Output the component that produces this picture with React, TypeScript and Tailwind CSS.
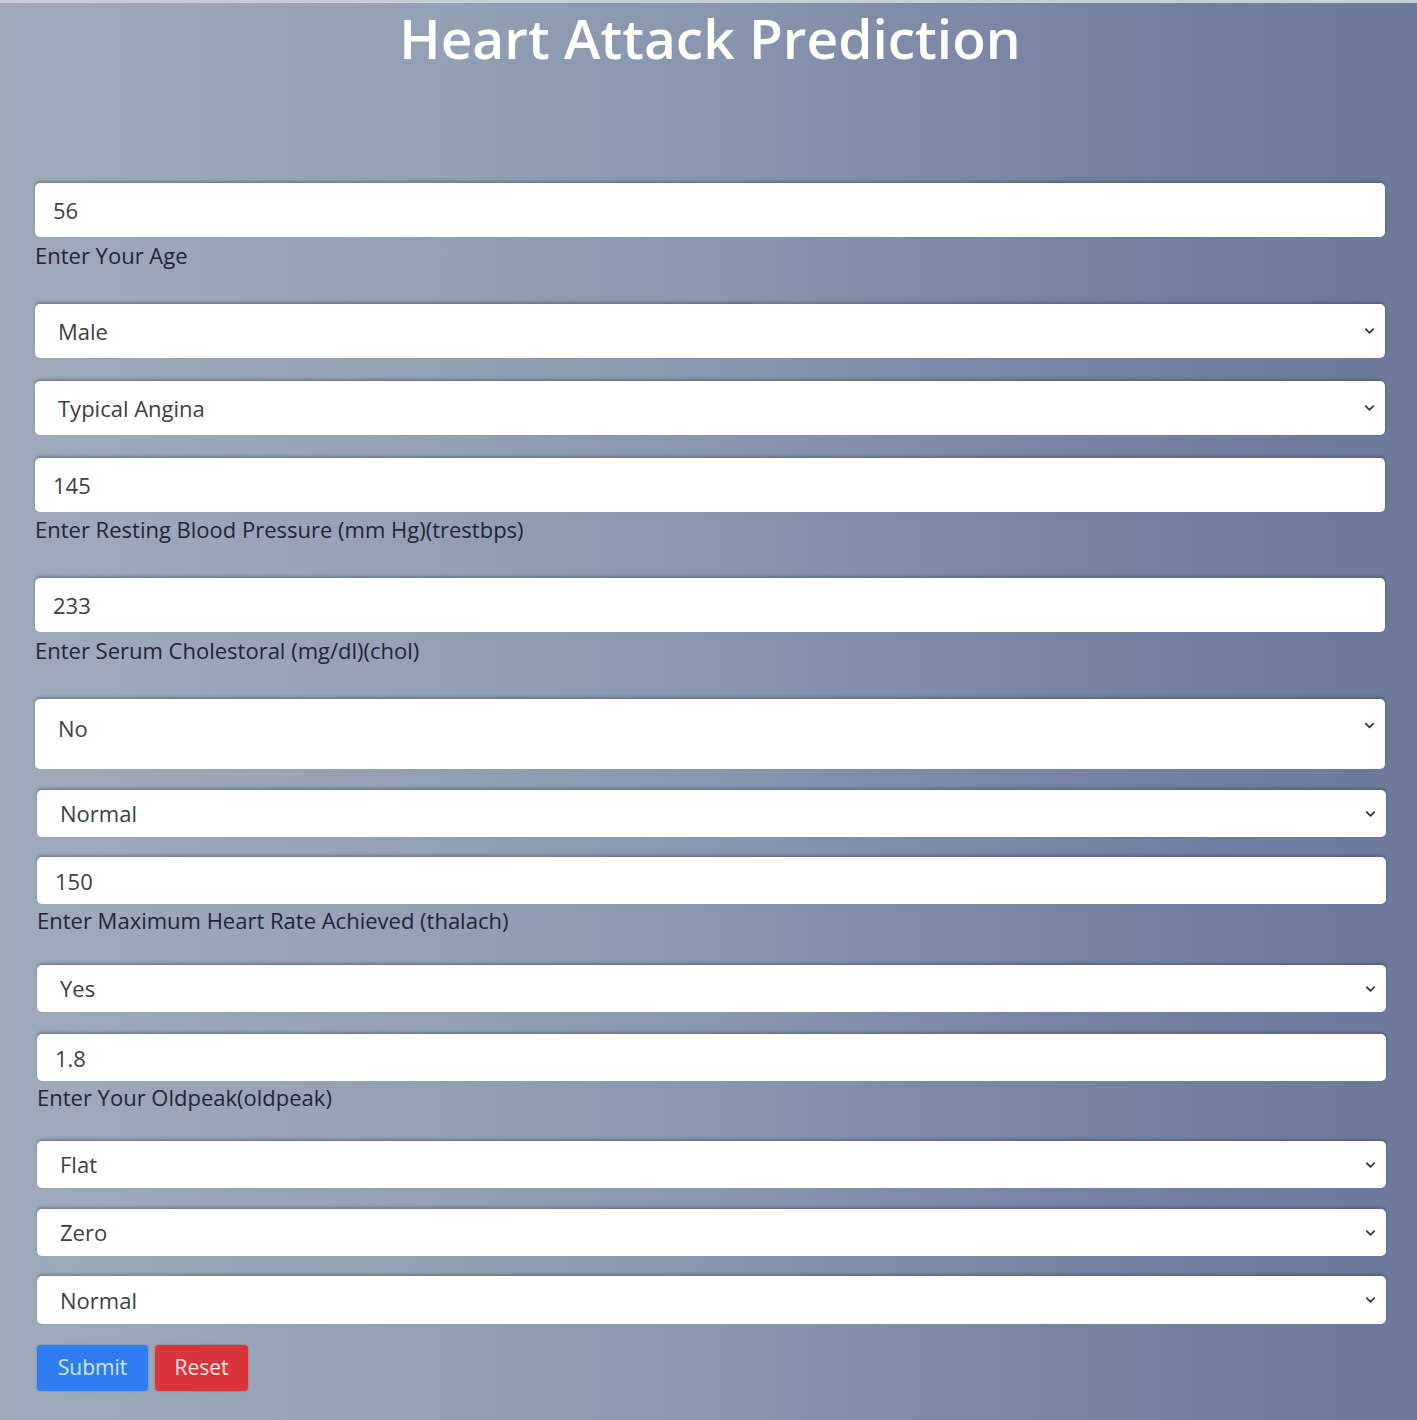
import { ChevronDown } from 'lucide-react';

type Row =
  | { kind: 'input'; value: string; label: string; mt: string; h: string; labelGap: string; shift?: boolean }
  | { kind: 'select'; value: string; options: string[]; mt: string; h: string; tall?: boolean; shift?: boolean };

const ROWS: Row[] = [
  { kind: 'input', value: '56', label: 'Enter Your Age', mt: 'mt-[114px]', h: 'h-[54px]', labelGap: 'mt-[5px]' },
  { kind: 'select', value: 'Male', options: ['Male', 'Female'], mt: 'mt-[36px]', h: 'h-[54px]' },
  { kind: 'select', value: 'Typical Angina', options: ['Typical Angina', 'Atypical Angina', 'Non-anginal Pain', 'Asymptomatic'], mt: 'mt-[23px]', h: 'h-[54px]' },
  { kind: 'input', value: '145', label: 'Enter Resting Blood Pressure (mm Hg)(trestbps)', mt: 'mt-[23px]', h: 'h-[54px]', labelGap: 'mt-[4px]' },
  { kind: 'input', value: '233', label: 'Enter Serum Cholestoral (mg/dl)(chol)', mt: 'mt-[36px]', h: 'h-[54px]', labelGap: 'mt-[5px]' },
  { kind: 'select', value: 'No', options: ['No', 'Yes'], mt: 'mt-[36px]', h: 'h-[70px]', tall: true },
  { kind: 'select', value: 'Normal', options: ['Normal', 'ST-T Wave Abnormality', 'Left Ventricular Hypertrophy'], mt: 'mt-[21px]', h: 'h-[47px]', shift: true },
  { kind: 'input', value: '150', label: 'Enter Maximum Heart Rate Achieved (thalach)', mt: 'mt-[20px]', h: 'h-[47px]', labelGap: 'mt-[3px]', shift: true },
  { kind: 'select', value: 'Yes', options: ['Yes', 'No'], mt: 'mt-[32px]', h: 'h-[47px]', shift: true },
  { kind: 'input', value: '1.8', label: 'Enter Your Oldpeak(oldpeak)', mt: 'mt-[22px]', h: 'h-[47px]', labelGap: 'mt-[3px]', shift: true },
  { kind: 'select', value: 'Flat', options: ['Upsloping', 'Flat', 'Downsloping'], mt: 'mt-[31px]', h: 'h-[47px]', shift: true },
  { kind: 'select', value: 'Zero', options: ['Zero', 'One', 'Two', 'Three'], mt: 'mt-[21px]', h: 'h-[47px]', shift: true },
  { kind: 'select', value: 'Normal', options: ['Normal', 'Fixed Defect', 'Reversable Defect'], mt: 'mt-[20px]', h: 'h-[48px]', shift: true },
];

const boxCls =
  'w-full rounded-[5px] bg-white text-[22px] text-[#3d4046] shadow-[0_-2px_3px_rgba(40,50,70,0.35)] outline-none';

function Field({ row }: { row: Row }) {
  const shift = row.shift ? 'ml-[2px] mr-[-1px]' : '';
  if (row.kind === 'input') {
    return (
      <div className={`${row.mt} ${shift}`}>
        <input type="text" defaultValue={row.value} className={`${boxCls} ${row.h} px-[18px]`} />
        <p className={`${row.labelGap} text-[22px] leading-[26px] text-[#1e2733]`}>{row.label}</p>
      </div>
    );
  }
  return (
    <div className={`${row.mt} ${shift} relative`}>
      <select
        defaultValue={row.value}
        className={`${boxCls} ${row.h} appearance-none pl-[23px] pr-10 ${row.tall ? 'pb-[12px]' : ''}`}
      >
        {row.options.map((o) => (
          <option key={o}>{o}</option>
        ))}
      </select>
      <ChevronDown
        className={`pointer-events-none absolute right-[8px] h-[15px] w-[15px] text-[#3b3f45] ${row.tall ? 'top-[19px]' : 'top-1/2 -translate-y-1/2'}`}
        strokeWidth={3}
      />
    </div>
  );
}

export default function App() {
  return (
    <div
      className="min-h-[1420px] w-full border-t-[3px] border-[#c9ced6] bg-[linear-gradient(90deg,#9dabb9_0%,#93a1b4_30%,#8593ad_55%,#7683a3_75%,#6c799a_100%)] pl-[35px] pr-[32px] pb-[28px]"
      style={{ fontFamily: '"Open Sans", "Noto Sans", sans-serif' }}
    >
      <h1 className="pt-[4px] text-center text-[55px] font-semibold leading-[62px] text-white">
        Heart Attack Prediction
      </h1>
      <form onSubmit={(e) => e.preventDefault()}>
        {ROWS.map((row, i) => (
          <Field key={i} row={row} />
        ))}
        <div className="mt-[21px] ml-[2px] flex gap-[7px]">
          <button
            type="submit"
            className="h-[46px] w-[111px] rounded-[4px] bg-[#2f7cf2] text-[21px] text-[#d3e4ff] shadow-[0_0_2px_rgba(47,124,242,0.8)]"
          >
            Submit
          </button>
          <button
            type="reset"
            className="h-[46px] w-[93px] rounded-[4px] bg-[#d9353b] text-[21px] text-[#fde8e8] shadow-[0_0_2px_rgba(217,53,59,0.8)]"
          >
            Reset
          </button>
        </div>
      </form>
    </div>
  );
}
